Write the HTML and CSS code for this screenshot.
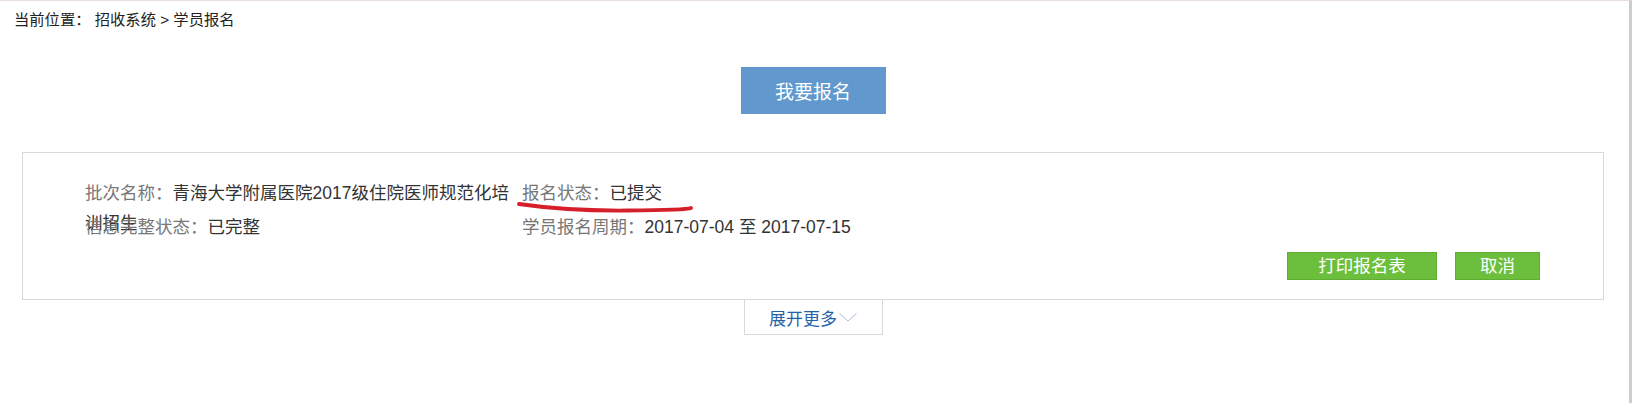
FILE: index.html
```html
<!DOCTYPE html>
<html lang="zh-CN">
<head>
  <meta charset="UTF-8" />
  <meta name="viewport" content="width=device-width, initial-scale=1.0"/>
  <title>学员报名</title>
  <link rel="stylesheet" href="styles.css">
</head>
<body>
  <div class="crumb">当前位置： 招收系统 &gt; 学员报名</div>

  <div class="main">
    <div class="apply-wrap">
      <button class="btn-apply">我要报名</button>
    </div>

    <section class="card">
      <div class="info">
        <div class="item"><span class="label">批次名称：</span><span class="value">青海大学附属医院2017级住院医师规范化培训招生</span></div>
        <div class="item"><span class="label">报名状态：</span><span class="value">已提交</span></div>
        <div class="item"><span class="label">信息完整状态：</span><span class="value">已完整</span></div>
        <div class="item"><span class="label">学员报名周期：</span><span class="value">2017-07-04 至 2017-07-15</span></div>
      </div>

      <div class="actions">
        <button class="btn-green btn-print">打印报名表</button>
        <button class="btn-green btn-cancel">取消</button>
      </div>

      <!-- red pen mark under the status -->
      <svg class="mark" width="180" height="14" viewBox="0 0 180 14">
        <path d="M2 3 Q 50 10 110 9.5 T 174 7" fill="none" stroke="#d5202b" stroke-width="3.8" stroke-linecap="round"/>
      </svg>
    </section>

    <div class="more-wrap">
      <div class="more">展开更多
        <svg class="chev" width="18" height="9" viewBox="0 0 18 9">
          <polyline points="0.5,0.5 9,8 17.5,0.5" fill="none" stroke="#a8bfd6" stroke-width="1"/>
        </svg>
      </div>
    </div>
  </div>
</body>
</html>
```

FILE: styles.css
```css
html, body {
  height: 100%;
}

body {
  margin: 0;
  font-family: "Liberation Sans", "Noto Sans CJK SC", sans-serif;
  color: #333;
  background: #fff;
  border-top: 1px solid #e8dce6;
  border-right: 3px solid #c9ced3;
  box-sizing: border-box;
}

.crumb {
  padding: 9px 0 0 14px;
  font-size: 15.3px;
  line-height: 20px;
  color: #222;
  white-space: pre;
}

.main {
  margin: 0 25px 0 22px;
}

.apply-wrap {
  padding-top: 37px;
  text-align: center;
}

.btn-apply {
  width: 145px;
  height: 47px;
  border: none;
  background: #6199cf;
  color: #fff;
  font-family: inherit;
  font-size: 19px;
  cursor: pointer;
}

.card {
  position: relative;
  margin-top: 38px;
  padding: 25px 63px 19px 62px;
  border: 1px solid #d9d9d9;
  background: #fff;
}

.info {
  display: grid;
  grid-template-columns: 437px 1fr;
  grid-auto-rows: 34px;
}

.item {
  font-size: 17.5px;
  line-height: 30px;
}

.label {
  color: #777;
}

.value {
  color: #333;
}

.actions {
  display: flex;
  justify-content: flex-end;
  gap: 18px;
  margin-top: 6px;
}

.btn-green {
  height: 28px;
  border: 1px solid #5fae33;
  background: #6cbf3d;
  color: #fff;
  font-family: inherit;
  font-size: 17.5px;
  line-height: 24px;
  padding: 0;
  cursor: pointer;
}

.btn-print {
  width: 150px;
}

.btn-cancel {
  width: 85px;
}

.mark {
  position: absolute;
  left: 494px;
  top: 48px;
}

.more-wrap {
  display: flex;
  justify-content: center;
}

.more {
  display: flex;
  align-items: center;
  justify-content: center;
  width: 137px;
  height: 34px;
  border: 1px solid #d9d9d9;
  border-top: none;
  color: #2563a8;
  font-size: 17px;
  cursor: pointer;
}

.chev {
  margin-left: 2px;
}
```
